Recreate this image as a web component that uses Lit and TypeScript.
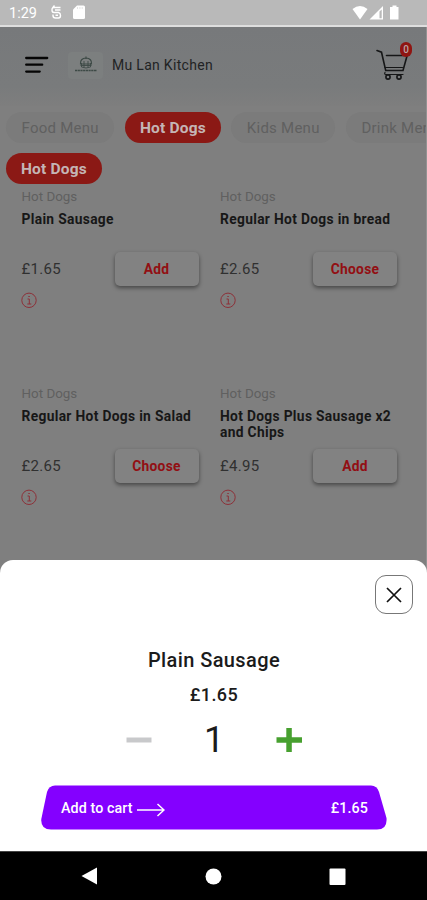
import { LitElement, html, css } from "lit";
import { customElement } from "lit/decorators.js";

interface Dish {
  name: string;
  price: string;
  action: string;
}

const dishes: Dish[] = [
  { name: "Plain Sausage", price: "£1.65", action: "Add" },
  { name: "Regular Hot Dogs in bread", price: "£2.65", action: "Choose" },
  { name: "Regular Hot Dogs in Salad", price: "£2.65", action: "Choose" },
  { name: "Hot Dogs Plus Sausage x2 and Chips", price: "£4.95", action: "Add" },
];

const base = css`
  * { box-sizing: border-box; }
  svg { display: block; flex: none; }
  button { font: inherit; border: 0; padding: 0; margin: 0; background: none; }
`;

@customElement("status-bar")
class StatusBar extends LitElement {
  static styles = [base, css`
    :host { display: flex; box-sizing: border-box; height: 27px; background: #b9b9b9; border-bottom: 2px solid #dedede; color: #fff; padding: 0 27px 0 9px; align-items: center; }
    .time { font-size: 14.500px; line-height: 25px; width: 40px; padding-top: 2px; }
    .right { margin-left: auto; }
  `];
  render() {
    return html`
      <span class="time">1:29</span>
      <svg width="38" height="27" viewBox="0 0 38 27" fill="none">
        <path d="M11.500 8.500H5Q3 8.500 3 11t2 2.500H9.500Q11.500 14 11.500 16.500T9.500 19H6.500Q4 19 4 16.500V15.500M5.500 6.500L3.500 9M6 11h5.500M6.500 16.200H9" stroke="#fff" stroke-width="1.400"/>
        <path d="M28 6.500h6.500Q36 6.500 36 8v10.500q0 1.500-1.500 1.500h-9Q24 20 24 18.500v-8z" fill="#fff"/>
        <path d="M28.500 8v2M30.900 8v2M33.200 8v2" stroke="#ddd" stroke-width=".8"/>
      </svg>
      <svg class="right" width="48" height="25" viewBox="0 0 48 25">
        <path d="M0.500 9Q8 3 15.500 9L8 19.500z" fill="#fff"/>
        <path d="M31 6v13.500H17.500z" fill="#fff"/>
        <path d="M27.500 11.500L29.700 9.500v8.700h-2.200z" fill="#b9b9b9"/>
        <path d="M40.500 5.500h4v1.500h2v12.500h-8.500V7h2.500z" fill="#fff"/>
      </svg>`;
  }
}

@customElement("top-bar")
class TopBar extends LitElement {
  static styles = [base, css`
    :host { display: flex; box-sizing: border-box; height: 79px; padding: 0 13px 0 25px; align-items: flex-start; background: linear-gradient(#77797b, #797b7c 75%, #7e7e7e); }
    .menu { margin-top: 28px; }
    .logo { margin: 25px 0 0 19px; width: 35px; height: 27px; border-radius: 4px; background: #7c7f7f; display: flex; flex-direction: column; align-items: center; padding-top: 4px; }
    .title { margin: 28px 0 0 9px; font-size: 14px; line-height: 20px; letter-spacing: 0.3px; color: #222324; }
    .cart { position: relative; margin: 21px 2px 0 auto; }
    .badge { position: absolute; left: 24px; top: -6px; width: 12px; height: 15px; border-radius: 6px; background: #8f1512; color: #b9a5a5; font-size: 10px; line-height: 15px; text-align: center; font-weight: 500; }
  `];
  render() {
    return html`
      <svg class="menu" width="24" height="20" viewBox="0 0 24 20" stroke="#050505" stroke-width="2.300" stroke-linecap="round">
        <path d="M1.200 3h21M1.200 9.700h16M1.200 16.600h13.500"/>
      </svg>
      <div class="logo">
        <svg width="24" height="18" viewBox="0 0 24 18" fill="none" stroke="#3d4a46">
          <path d="M6.500 8q-.5-5.500 5.500-6 6 .5 5.500 6zM12 .5V3" stroke-width="1.200"/>
          <path d="M7.500 7v4q4.500 2 9 0V7M10 5v6M14 5v6M6.500 9.500h11" stroke-width=".9"/>
          <path d="M1 14.500h22" stroke-width="1.300" stroke-dasharray="2.200 .5"/>
        </svg>
      </div>
      <span class="title">Mu Lan Kitchen</span>
      <div class="cart">
        <svg width="35" height="33" viewBox="0 0 35 33" fill="none" stroke="#151617" stroke-width="1.600" stroke-linecap="round">
          <path d="M1 2.500l4.500 1.700L9.700 22.500H27L31 8M10.500 7.500H31" />
          <path d="M9 19.500h17.500M9 24.500q-1 2 1 2H27" stroke-width="1.200"/>
          <circle cx="12" cy="29" r="2.100"/><circle cx="23" cy="29" r="2.100"/>
        </svg>
        <span class="badge">0</span>
      </div>`;
  }
}

@customElement("dish-card")
class DishCard extends LitElement {
  static properties = { dish: { attribute: false } };
  declare dish: Dish;
  static styles = [base, css`
    :host { display: block; height: 197px; }
    .category { font-size: 13.400px; line-height: 18px; color: #606060; letter-spacing: 0; }
    .name { margin-top: 5px; min-height: 33px; font-size: 13.800px; line-height: 16px; font-weight: 700; color: #171717; letter-spacing: 0.320px; width: 180px; }
    .row { display: flex; justify-content: space-between; align-items: center; height: 34px; margin-top: 8px; width: 177px; }
    .price { font-size: 15px; color: #303030; letter-spacing: 0.300px; }
    .action { width: 84px; height: 34px; border-radius: 5px; background: #828282; color: #920f13; font-size: 13.800px; font-weight: 700; letter-spacing: 0.250px; box-shadow: 0 2px 4px rgba(0,0,0,.45); }
    .info { margin: 6px 0 0 -0.500px; }
  `];
  render() {
    return html`
      <div class="category">Hot Dogs</div>
      <div class="name">${this.dish.name}</div>
      <div class="row"><span class="price">${this.dish.price}</span><button class="action">${this.dish.action}</button></div>
      <svg class="info" width="17" height="17" viewBox="0 0 17 17" fill="none" stroke="#8d3038" stroke-width="1">
        <circle cx="8" cy="8.300" r="7.200"/><path d="M6.500 7H8.300v5M6.300 12h4M7.300 4.500h1.500"/>
      </svg>`;
  }
}

@customElement("item-sheet")
class ItemSheet extends LitElement {
  static styles = [base, css`
    :host { display: flex; box-sizing: border-box; flex-direction: column; align-items: center; height: 291px; border-radius: 13px 13px 0 0; background: #fff; color: #1b1b1b; }
    .close { align-self: flex-end; margin: 15px 14px 0 0; width: 38px; height: 39px; border: 1px solid #777; border-radius: 11px; display: grid; place-items: center; }
    .name { margin: 33px 0 0 1px; font-size: 20px; line-height: 26px; font-weight: 500; letter-spacing: 0.400px; }
    .price { margin: 11px 0 0 1px; font-size: 18px; line-height: 22px; font-weight: 500; letter-spacing: 0.400px; }
    .stepper { display: flex; align-items: center; justify-content: space-between; width: 176px; height: 40px; margin: 14px 0 0 1px; }
    .count { font-size: 36px; line-height: 40px; }
    .order { position: relative; width: 348px; height: 45px; margin: 25px 0 0 1px; color: #fff; }
    .label { position: absolute; inset: 0; display: flex; align-items: center; padding: 0 20px 0 21px; font-size: 14.300px; font-weight: 500; letter-spacing: 0.080px; }
    .arrow { margin: 5px 0 0 3px; }
    .total { margin-left: auto; }
  `];
  render() {
    return html`
      <button class="close"><svg width="16" height="16" viewBox="0 0 16 16" stroke="#111" stroke-width="1.700"><path d="M1 1l14 14M15 1L1 15"/></svg></button>
      <div class="name">Plain Sausage</div>
      <div class="price">£1.65</div>
      <div class="stepper">
        <svg width="26" height="26" viewBox="0 0 26 26"><path d="M0.500 10.500h25v5H.5z" fill="#c8c9cb"/></svg>
        <span class="count">1</span>
        <svg width="26" height="26" viewBox="0 0 26 26" fill="#47a02f"><path d="M10.300 1h5.500v9.300H26v5.500H15.800V25h-5.500v-9.200H.5v-5.500h9.800z"/></svg>
      </div>
      <div class="order">
        <svg width="348" height="45" viewBox="0 0 348 45"><path d="M15 .5H331Q337 .5 339 7L346.500 33Q347.500 44.500 337 44.500H11Q.5 44.500 1.300 34L7 7Q9 .5 15 .5z" fill="#8400ff"/></svg>
        <div class="label"><span>Add to cart</span>
          <svg class="arrow" width="29" height="14" viewBox="0 0 29 14" fill="none" stroke="#fff"><path d="M1 7h27M21.500 1L28 7l-6.500 6" stroke-width="1.500"/></svg>
          <span class="total">£1.65</span></div>
      </div>`;
  }
}

@customElement("app-root")
class AppRoot extends LitElement {
  static styles = [base, css`
    :host { display: flex; flex-direction: column; width: 427px; height: 900px; overflow: hidden; font-family: Roboto, "Liberation Sans", sans-serif; background: #7f7f7f; }
    .content { flex: 1; min-height: 0; display: flex; flex-direction: column; box-shadow: inset -1px 0 #929292; }
    .menu { height: 454px; flex: none; margin-right: 1px; }
    .menu + item-sheet { flex: none; margin-top: 79px; }
    .chips { display: flex; gap: 10.500px; padding: 6px 0 0 6px; overflow: hidden; }
    .chip { flex: none; height: 31px; line-height: 32px; padding: 0 15.700px 0 15.500px; border-radius: 16px; background: #7b7b7b; color: #606060; font-size: 15px; letter-spacing: 0.250px; }
    .active { padding: 0 15px; background: #8b1915; color: #c4b5b5; font-weight: 700; font-size: 15.500px; letter-spacing: 0.180px; }
    .sub { padding-top: 10px; }
    .grid { display: grid; grid-template-columns: 198.500px 185px; padding: 4px 0 0 21.500px; }
    .nav { height: 49px; background: #000; display: flex; justify-content: space-between; align-items: center; padding: 0 81px; border-top: 1px solid #444; }
  `];
  render() {
    return html`
      <status-bar></status-bar>
      <div class="content">
        <div class="menu">
          <top-bar></top-bar>
          <div class="chips">
            <span class="chip">Food Menu</span><span class="chip active">Hot Dogs</span><span class="chip">Kids Menu</span><span class="chip">Drink Menu</span>
          </div>
          <div class="chips sub"><span class="chip active">Hot Dogs</span></div>
          <div class="grid">${dishes.map((d) => html`<dish-card .dish=${d}></dish-card>`)}</div>
        </div>
        <item-sheet></item-sheet>
      </div>
      <div class="nav">
        <svg width="17" height="18" viewBox="0 0 17 18" fill="#fff"><path d="M16 .5v17L.5 9z"/></svg>
        <svg width="17" height="17" viewBox="0 0 17 17" fill="#fff"><circle cx="8.500" cy="8.500" r="8"/></svg>
        <svg width="17" height="17" viewBox="0 0 17 17" fill="#fff"><rect x=".5" y=".5" width="16" height="16.500" rx="1"/></svg>
      </div>`;
  }
}
